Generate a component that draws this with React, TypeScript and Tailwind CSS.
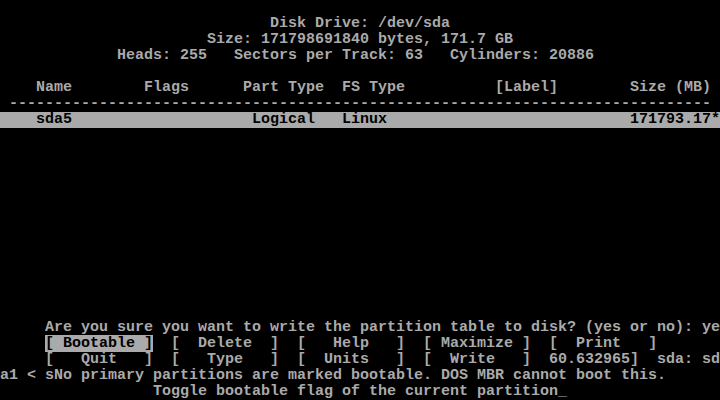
import React from "react";

function place(parts: [number, string][]): string {
  let s = "";
  for (const [col, text] of parts) {
    while (s.length < col) s += " ";
    s += text;
  }
  return s;
}

const Row = ({ children, className = "" }: { children?: React.ReactNode; className?: string }) => (
  <div className={`h-[16px] leading-[16px] whitespace-pre ${className}`}>{children}</div>
);

export default function App() {
  const header = place([
    [4, "Name"],
    [16, "Flags"],
    [27, "Part Type"],
    [38, "FS Type"],
    [55, "[Label]"],
    [70, "Size (MB)"],
  ]);
  const part = place([
    [4, "sda5"],
    [28, "Logical"],
    [38, "Linux"],
    [70, "171793.17*"],
  ]);
  return (
    <div
      className="w-[720px] h-[400px] bg-black text-[#aaaaaa] text-[15px] font-bold overflow-hidden flex flex-col"
      style={{ fontFamily: '"Liberation Mono", "DejaVu Sans Mono", monospace' }}
    >
      <Row />
      <Row>{place([[30, "Disk Drive: /dev/sda"]])}</Row>
      <Row>{place([[23, "Size: 171798691840 bytes, 171.7 GB"]])}</Row>
      <Row>{place([[13, "Heads: 255   Sectors per Track: 63   Cylinders: 20886"]])}</Row>
      <Row />
      <Row>{header}</Row>
      <Row>{" " + "-".repeat(78)}</Row>
      <Row className="bg-[#aaaaaa] text-black">{part}</Row>
      <Row />
      <Row />
      <Row />
      <Row />
      <Row />
      <Row />
      <Row />
      <Row />
      <Row />
      <Row />
      <Row />
      <Row />
      <Row>{"     Are you sure you want to write the partition table to disk? (yes or no): ye"}</Row>
      <Row>
        {"     "}
        <span className="bg-[#aaaaaa] text-black">[ Bootable ]</span>
        {"  [  Delete  ]  [   Help   ]  [ Maximize ]  [  Print   ]"}
      </Row>
      <Row>{"     [   Quit   ]  [   Type   ]  [  Units   ]  [  Write   ]  60.632965]  sda: sd"}</Row>
      <Row>{"a1 < sNo primary partitions are marked bootable. DOS MBR cannot boot this."}</Row>
      <Row>{place([[17, "Toggle bootable flag of the current partition_"]])}</Row>
    </div>
  );
}
